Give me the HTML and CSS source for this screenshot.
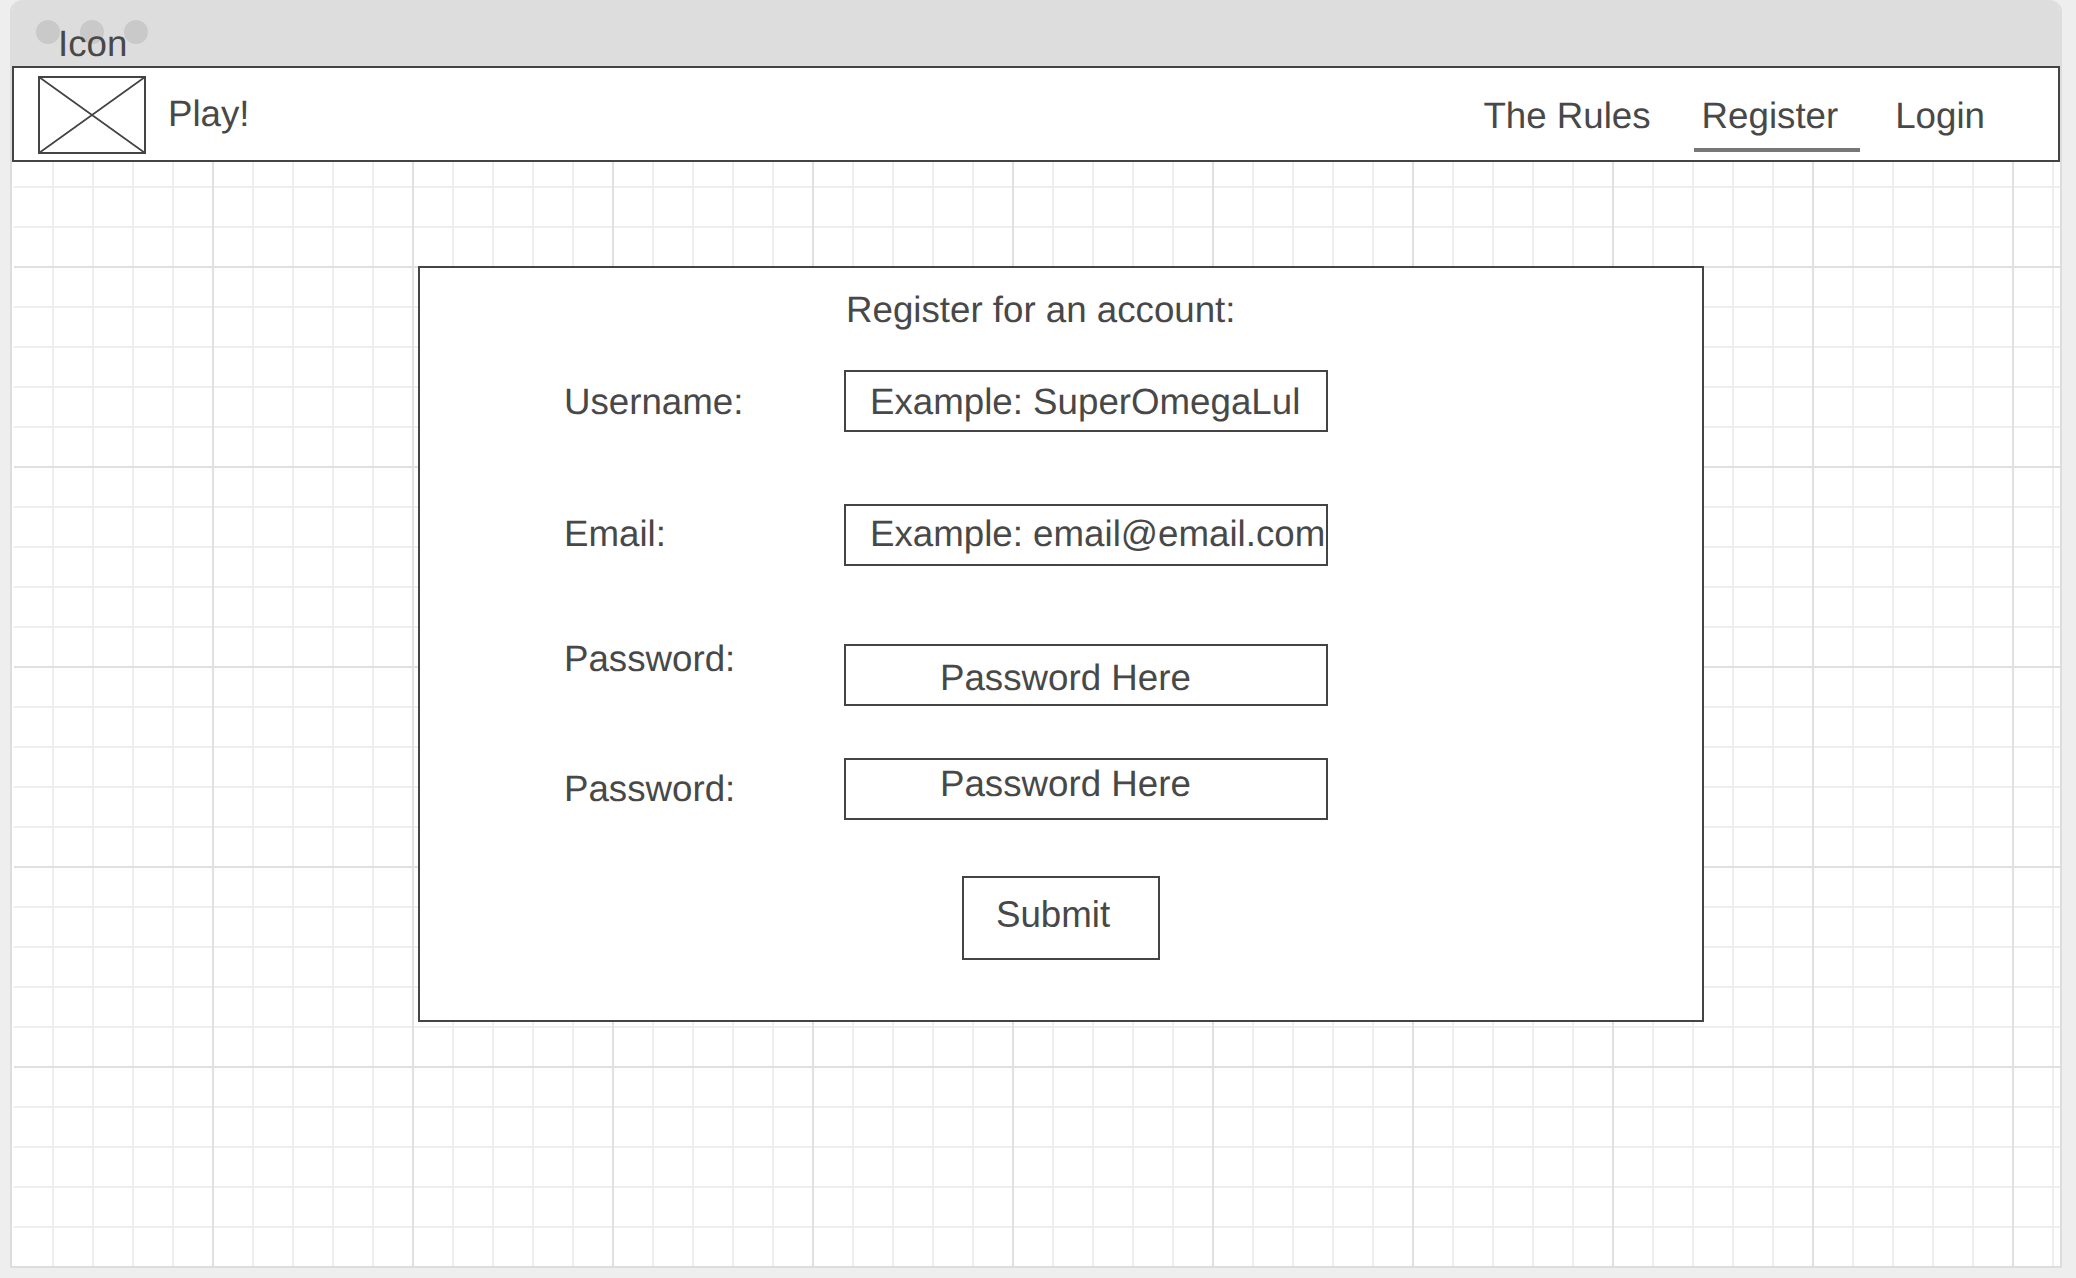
FILE: index.html
```html
<!DOCTYPE html>
<html lang="en">
<head>
  <meta charset="UTF-8">
  <title>Register</title>
  <link rel="stylesheet" href="styles.css">
</head>
<body>

  <div class="window">
    <div class="title-bar">
      <span class="dot"></span>
      <span class="dot"></span>
      <span class="dot"></span>
      <span class="icon-label">Icon</span>
    </div>

    <div class="navbar">
      <svg class="logo" width="108" height="78" viewBox="0 0 108 78">
        <rect x="1" y="1" width="106" height="76" fill="#fff" stroke="#444" stroke-width="2"/>
        <path d="M1 1 L107 77 M107 1 L1 77" stroke="#444" stroke-width="1.7" fill="none"/>
      </svg>
      <span class="brand">Play!</span>
      <a class="nav-link rules" href="#">The Rules</a>
      <a class="nav-link active" href="#">Register</a>
      <a class="nav-link login" href="#">Login</a>
    </div>

    <div class="canvas">
      <div class="card">
        <h3 class="card-title">Register for an account:</h3>

        <div class="row">
          <label class="row-label">Username:</label>
          <div class="field field-user">Example: SuperOmegaLul</div>
        </div>

        <div class="row row-email">
          <label class="row-label nudge-more">Email:</label>
          <div class="field field-email">Example: email@email.com</div>
        </div>

        <div class="row row-pass-one">
          <label class="row-label raised">Password:</label>
          <div class="field field-pass low">Password Here</div>
        </div>

        <div class="row row-pass-two">
          <label class="row-label nudge">Password:</label>
          <div class="field field-pass high">Password Here</div>
        </div>

        <button class="submit-btn">Submit</button>
      </div>
    </div>
  </div>

</body>
</html>
```

FILE: styles.css
```css
body {
  background-color: #eeeeee;
  font-family: "Liberation Sans", Arial, sans-serif;
  color: #484848;
  font-size: 36.7px;
  text-rendering: geometricPrecision;
  margin: 0;
  padding: 0;
  height: 1278px;
  overflow: hidden;
}

.window {
  position: relative;
  box-sizing: border-box;
  margin-left: 10px;
  width: 2052px;
  height: 1268px;
  background: #ffffff;
  border: solid #dddddd;
  border-width: 0 2px 2px;
  border-radius: 12px 12px 0 0;
  overflow: hidden;
  display: flex;
  flex-direction: column;
}

.title-bar {
  height: 66px;
  flex: none;
  background: #dddddd;
  display: flex;
  align-items: center;
  gap: 20px;
  padding-left: 24px;
  padding-bottom: 2px;
  box-sizing: border-box;
}

.dot {
  width: 24px;
  height: 24px;
  border-radius: 50%;
  background: #c9c9c9;
}

.icon-label {
  position: absolute;
  left: 46px;
  top: 23px;
  line-height: 41px;
}

.navbar {
  height: 96px;
  flex: none;
  box-sizing: border-box;
  border: 2px solid #444444;
  background: #ffffff;
  display: flex;
  align-items: center;
  padding-left: 24px;
}

.logo {
  flex: none;
  margin-top: 2px;
}

.brand {
  margin-left: 22px;
}

.nav-link {
  color: #484848;
  text-decoration: none;
  line-height: 41px;
  align-self: flex-start;
  margin-top: 27px;
}

.rules {
  margin-left: auto;
}

.active {
  margin-left: 43px;
  padding: 0 22px 12px 8px;
  border-bottom: 4px solid #777777;
}

.login {
  margin-left: 35px;
  margin-right: 73px;
}

.canvas {
  flex: 1;
  margin-left: 2px;
  padding: 104px 0 0 404px;
  background-color: #ffffff;
  background-image:
    linear-gradient(to right, #e0e0e0 2px, transparent 2px),
    linear-gradient(to bottom, #e0e0e0 2px, transparent 2px),
    linear-gradient(to right, #eeeeee 2px, transparent 2px),
    linear-gradient(to bottom, #eeeeee 2px, transparent 2px);
  background-size: 200px 200px, 200px 200px, 40px 40px, 40px 40px;
  background-position: 198px 0, 0 104px, 38px 0, 0 24px;
}

.card {
  box-sizing: border-box;
  width: 1286px;
  height: 756px;
  border: 2px solid #444444;
  background: #ffffff;
  padding: 21px 0 0 144px;
}

.card-title {
  font-size: inherit;
  font-weight: normal;
  line-height: 41px;
  margin: 0 0 40px 282px;
}

.row {
  display: flex;
  align-items: center;
}

.row-label {
  width: 280px;
  flex: none;
  line-height: 41px;
}

.nudge {
  padding-bottom: 1px;
}

.nudge-more {
  padding-bottom: 3px;
}

.raised {
  margin-top: -6px;
}

.field {
  box-sizing: border-box;
  width: 484px;
  height: 62px;
  border: 2px solid #444444;
  background: #ffffff;
  padding: 8px 0 0 24px;
  line-height: 41px;
  white-space: nowrap;
}

.field-user {
  padding-top: 9px;
}

.field-email {
  padding-top: 7px;
}

.row-email {
  margin-top: 72px;
}

.row-pass-one {
  margin-top: 78px;
  align-items: flex-start;
}

.row-pass-two {
  margin-top: 52px;
}

.field-pass {
  padding-left: 94px;
}

.low {
  padding-top: 11px;
}

.high {
  padding-top: 3px;
}

.submit-btn {
  display: block;
  box-sizing: border-box;
  width: 198px;
  height: 84px;
  margin: 56px 0 0 398px;
  border: 2px solid #444444;
  background: #ffffff;
  color: #484848;
  font-family: inherit;
  font-size: inherit;
  line-height: 41px;
  text-align: left;
  padding: 0 0 8px 32px;
}
```
